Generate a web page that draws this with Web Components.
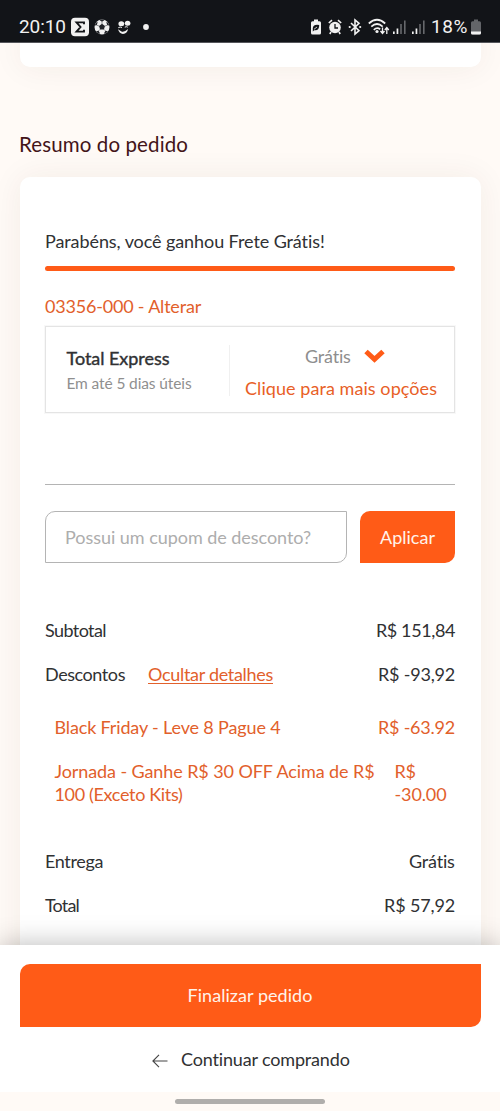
<!DOCTYPE html>
<html lang="pt-BR">
<head>
<meta charset="utf-8">
<title>Resumo do pedido</title>
<style>
html,body{margin:0;height:100%;overflow:hidden}
body{background:#fffaf6;font-family:Lato,"Open Sans",sans-serif;font-size:18px;color:#303133}
</style>
</head>
<body>
<checkout-page></checkout-page>
<script>
const define=(name,html,init)=>{
  const t=document.createElement('template');
  t.innerHTML=html;
  customElements.define(name,class extends HTMLElement{
    constructor(){super();this.attachShadow({mode:'open'}).append(t.content.cloneNode(true));}
    connectedCallback(){if(init)init(this);}
  });
};

/* A single line of text, tracked to fill the width given in "w". */
define('text-run',`<style>:host{display:block;white-space:nowrap;line-height:22px;height:22px;flex:none}span{display:inline-block}:host([underline]) span{text-decoration:underline;text-decoration-thickness:1px;text-underline-offset:2px;text-decoration-skip-ink:none}</style><span><slot></slot></span>`,el=>{
  const w=+el.getAttribute('w');
  if(!w)return;
  el.style.width=w+'px';
  const s=el.shadowRoot.querySelector('span');
  const n=el.textContent.length;
  s.style.letterSpacing=((w-s.getBoundingClientRect().width)/n)+'px';
});

define('status-bar',`<style>
:host{display:flex;box-sizing:border-box;height:43px;padding:11px 19px 0 19px;background:#121418;border-bottom:1px solid #55565b;color:#f1f1f1;font-family:Roboto,sans-serif;font-size:19px;align-items:center;position:relative;z-index:2}
svg{display:block;flex:none;height:20px;fill:#f1f1f1}
.sp{flex:1}
</style>
<text-run w="47">20:10</text-run>
<svg style="margin-left:5px" width="18" viewBox="0 0 18 20"><rect y=".7" width="18" height="18.6" rx="4"/><path d="M13 7.2V5.400H5.500l4 4.600-4 4.600H13v-1.800" fill="none" stroke="#121418" stroke-width="1.900"/></svg>
<svg style="margin-left:5px" width="16" viewBox="0 0 16 20"><circle cx="8" cy="10" r="7.500"/><path d="M8 6.800l3 2.200-1.100 3.500H6.100L5 9zM5.300 3.100L8 4.700l2.700-1.600L8 2.500zM.6 8.500l2.200-.3.900-3.200-1.500.4zM15.400 8.500l-2.200-.3-.9-3.200 1.500.4zM2 14.300l2.600-.5 1.500 2.800-1.600.1zM14 14.300l-2.600-.5-1.500 2.800 1.600.1z" fill="#222429"/><path d="M8 4.600V7M2.800 8.200L5 9M13.200 8.200L11 9M4.600 13.800l1.500-1.500M11.400 13.800l-1.500-1.500" stroke="#44464a" stroke-width=".6"/></svg>
<svg style="margin-left:7px" width="14" viewBox="0 0 14 20"><ellipse cx="4.300" cy="6.800" rx="2.900" ry="2.500"/><ellipse cx="10.600" cy="6.200" rx="2.800" ry="2.500"/><path d="M1.300 10.700q2-1.400 3.600 0M7.800 10.200q1.300-1 3 0" fill="none" stroke="#f1f1f1" stroke-width="1"/><path d="M1 12.300q1.500 1 3.500 2.200 3 .9 6.500-2.500-.6 4.700-5 4.900Q2.500 17 1 12.300z"/></svg>
<svg style="margin-left:12px" width="6" viewBox="0 0 6 20"><circle cx="3" cy="10" r="2.900"/></svg>
<div class="sp"></div>
<svg width="12" viewBox="0 0 12 20"><path d="M4 2.500h4v1.800h1.500q1.500 0 1.500 1.500V16q0 1.500-1.500 1.500h-7Q1 17.500 1 16V5.800q0-1.500 1.500-1.500H4z"/><path d="M2.800 11Q3.500 7 9.200 8q.2 6-5 5.300L2.800 14.500M4.500 12l3-2.200" fill="#121418"/><path d="M4 12.300l3-2.300" stroke="#f1f1f1" stroke-width=".8"/></svg>
<svg style="margin-left:6px" width="14" viewBox="0 0 14 20"><circle cx="7" cy="10.500" r="5.800"/><path d="M.8 6L4 3.200M13.200 6L10 3.200M3 15l-1.200 2M11 15l1.200 2" stroke="#f1f1f1" stroke-width="1.600"/><path d="M7 7v4h3" fill="none" stroke="#121418" stroke-width="1.300"/></svg>
<svg style="margin-left:6px" width="14" viewBox="0 0 14 20"><path d="M3 6l8 7.700L7 17V3l4 3.300L3 14" fill="none" stroke="#f1f1f1" stroke-width="1.600"/><circle cx="1.700" cy="10" r="1.100"/><circle cx="12.200" cy="10" r="1.100"/></svg>
<svg style="margin-left:6px" width="22" viewBox="0 0 22 20"><g fill="none" stroke="#f1f1f1" stroke-width="1.700"><path d="M.8 6.500Q9-1 17.200 6.500M3.300 9.700Q9 4.300 14.700 9.700M5.800 12.800Q9 9.800 12.200 12.200"/></g><circle cx="9" cy="14.500" r="1.600"/><path d="M14.500 10.500v5M12.500 14l2 2.500 2-2.500M18.800 17v-5M16.800 13l2-2.500 2 2.500" fill="none" stroke="#f1f1f1" stroke-width="1.300"/></svg>
<svg style="margin-left:3px" width="13" viewBox="0 0 13 20"><path d="M0 14.500h1.700v2.500H0zM3.600 11.500h1.700v5.500H3.600z"/><path d="M7.200 7h1.600v10H7.200zM11 3.500h1.600V17H11z" fill="#66686c"/></svg>
<svg style="margin-left:6px" width="13" viewBox="0 0 13 20"><path d="M0 14.500h1.700v2.500H0zM3.600 11.500h1.700v5.500H3.600z"/><path d="M7.200 7h1.600v10H7.200zM11 3.500h1.600V17H11z" fill="#66686c"/></svg>
<text-run w="37" style="margin-left:6px;margin-right:3px">18%</text-run>
<svg width="10" viewBox="0 0 10 20"><path d="M3 2.500h4v1.800h1.500q1.500 0 1.500 1.500V16q0 1.500-1.500 1.500h-7Q0 17.500 0 16V5.800q0-1.500 1.500-1.500H3z" fill="#636569"/><path d="M0 14.500h10V16q0 1.500-1.500 1.500h-7Q0 17.500 0 16z"/></svg>`);

define('surface-card',`<style>:host{display:block;box-sizing:border-box;margin:0 19.5px;background:#fff;border-radius:10px;box-shadow:0 0 32px rgba(80,40,20,.065)}</style><slot></slot>`);

define('brand-button',`<style>:host{display:flex;box-sizing:border-box;align-items:center;justify-content:center;background:#ff5b17;color:#fff3ea;border-radius:10px 0 10px 0}</style><slot></slot>`);

define('shipping-option',`<style>
:host{display:flex;box-sizing:border-box;height:87px;border:1px solid #e4e4e4;outline:1px solid #f8f8f8}
.l{width:183px;padding:20px 0 0 20.5px;box-sizing:border-box}
.l text-run+text-run{margin-top:3px;font-size:15.5px;color:#8f8f8f}
.name{-webkit-text-stroke:.4px #303133}
i{width:1px;height:51px;margin-top:18px;background:#f0f0f0}
.r{padding:18px 0 0 15px}
.top{display:flex;align-items:center;padding-left:60px;color:#8e8e8e}
.top svg{margin-left:13px}
.more{color:#e85f27;margin-top:10px}
</style>
<div class="l"><text-run class="name" w="103">Total Express</text-run><text-run w="125">Em até 5 dias úteis</text-run></div>
<i></i>
<div class="r"><div class="top"><text-run w="46">Grátis</text-run><svg width="21" height="14" viewBox="0 0 21 14"><path d="M2 2.500L10.500 10.400l8.500-7.900" fill="none" stroke="#ff5b17" stroke-width="5"/></svg></div><text-run class="more" w="192">Clique para mais opções</text-run></div>`);

define('coupon-form',`<style>
:host{display:flex;height:52px;gap:13px}
.in{width:302px;box-sizing:border-box;border:1px solid #b4b4b4;border-radius:10px 0 10px 0;padding-left:19px;display:flex;align-items:center;color:#adadad}
brand-button{width:95px}
</style><div class="in"><text-run w="246">Possui um cupom de desconto?</text-run></div><brand-button><text-run w="55">Aplicar</text-run></brand-button>`);

define('summary-row',`<style>:host{display:flex;justify-content:space-between;height:22px}div{display:flex;gap:23px}</style><div><slot></slot></div><slot name="value"></slot>`);

define('order-card',`<style>
surface-card{height:800px;padding:53px 25.5px 0 25.5px}
.bar{height:5px;border-radius:3px;background:#ff5b17;margin:14px 0 24px}
.o{color:#e2602b}
shipping-option{margin-top:9px}
hr{border:0;height:1px;background:#b4b4b4;margin:71px 0 26px}
coupon-form{margin-bottom:56px}
summary-row{margin-bottom:22px}
.sub{padding-left:9.5px;margin-top:31px}
.wrap{display:flex;gap:20px;padding-left:9.5px;margin-bottom:45px;height:45px}
.wrap text-run+text-run{margin-top:.6px}
</style>
<surface-card>
<text-run w="280">Parabéns, você ganhou Frete Grátis!</text-run>
<div class="bar"></div>
<text-run class="o" w="156">03356-000 - Alterar</text-run>
<shipping-option></shipping-option>
<hr>
<coupon-form></coupon-form>
<summary-row><text-run w="61">Subtotal</text-run><text-run slot="value" w="79">R$ 151,84</text-run></summary-row>
<summary-row><text-run w="80">Descontos</text-run><text-run class="o" underline w="125">Ocultar detalhes</text-run><text-run slot="value" w="77">R$ -93,92</text-run></summary-row>
<summary-row class="o sub"><text-run w="226">Black Friday - Leve 8 Pague 4</text-run><text-run slot="value" w="77">R$ -63.92</text-run></summary-row>
<div class="wrap o"><div><text-run w="320">Jornada - Ganhe R$ 30 OFF Acima de R$</text-run><text-run w="128">100 (Exceto Kits)</text-run></div><div><text-run w="21">R$</text-run><text-run w="52">-30.00</text-run></div></div>
<summary-row><text-run w="58">Entrega</text-run><text-run slot="value" w="46">Grátis</text-run></summary-row>
<summary-row><text-run w="34">Total</text-run><text-run slot="value" w="71">R$ 57,92</text-run></summary-row>
</surface-card>`);

define('checkout-footer',`<style>
:host{display:block;position:relative;z-index:2;background:#fffaf6;height:166px}
.p{height:147px;background:#fff;box-shadow:0 0 26px rgba(0,0,0,.28);clip-path:inset(-40px 0 0 0);padding:19px 19.5px 0;box-sizing:border-box}
brand-button{height:63px}
brand-button text-run{margin-bottom:1px}
.c{display:flex;justify-content:center;align-items:center;gap:13px;margin:21px 0 0 2px}
.nav{display:block;width:150px;height:5px;border-radius:3px;background:#b0aeac;margin:7px auto 0}
</style>
<div class="p"><brand-button><text-run w="125">Finalizar pedido</text-run></brand-button>
<div class="c"><svg width="16" height="14" viewBox="0 0 16 14" style="margin-top:3px"><path d="M7 .8L.9 7 7 13.200M1 7h14.500" fill="none" stroke="#444" stroke-width="1.100"/></svg><text-run w="169">Continuar comprando</text-run></div></div>
<i class="nav"></i>`);

define('checkout-page',`<style>
:host{display:flex;flex-direction:column;height:1111px;overflow:hidden}
main{height:902px;flex:none;overflow:hidden}
.prev{height:34px;margin-top:-10px}
.t{font-size:20.5px;color:#431419;margin:66px 0 22px 19px}
</style><status-bar></status-bar>
<main><surface-card class="prev"></surface-card><text-run class="t" w="169">Resumo do pedido</text-run><order-card></order-card></main>
<checkout-footer></checkout-footer>`);
</script>
</body>
</html>
